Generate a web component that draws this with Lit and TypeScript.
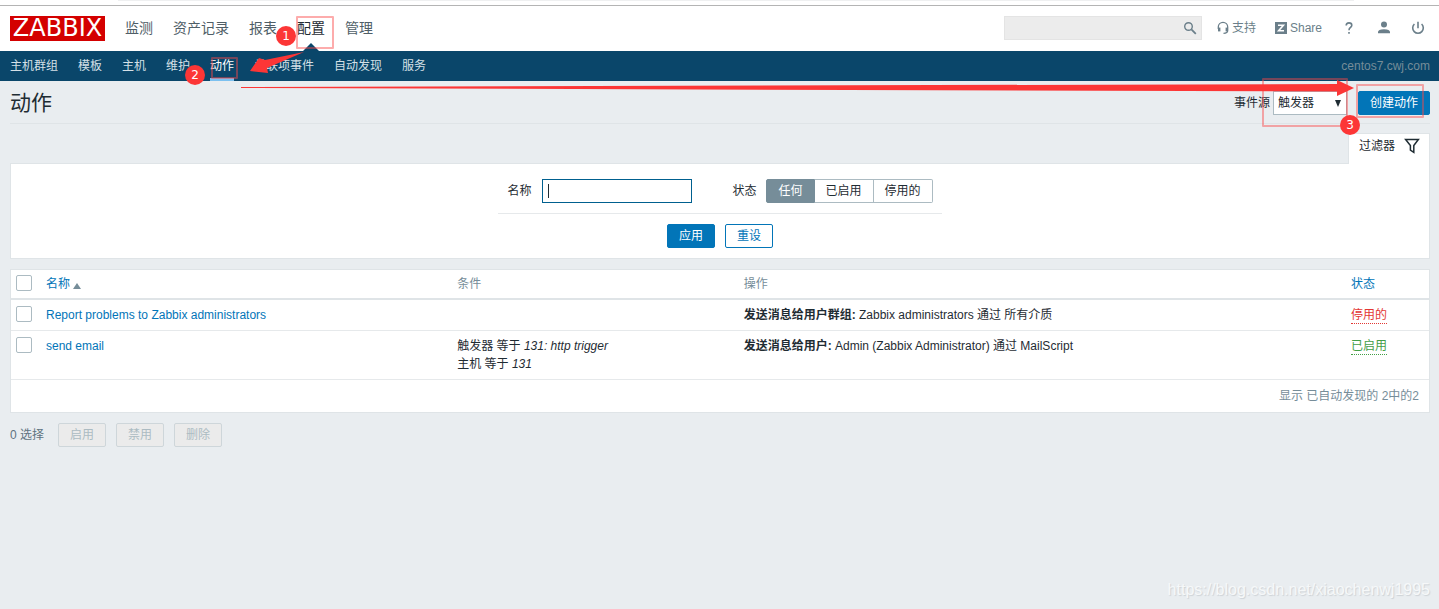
import { LitElement, html, css, svg } from "lit";
import { customElement, state } from "lit/decorators.js";
import { classMap } from "lit/directives/class-map.js";

interface Action {
  name: string;
  conditions: { text: string; value: string }[];
  target: string;
  detail: string;
  enabled: boolean;
}

const MENU = ["监测", "资产记录", "报表", "配置", "管理"];
const SUBMENU = ["主机群组", "模板", "主机", "维护", "动作", "关联项事件", "自动发现", "服务"];
const STATES = ["任何", "已启用", "停用的"];
const ACTIONS: Action[] = [
  {
    name: "Report problems to Zabbix administrators",
    conditions: [],
    target: "发送消息给用户群组:",
    detail: "Zabbix administrators 通过 所有介质",
    enabled: false,
  },
  {
    name: "send email",
    conditions: [
      { text: "触发器 等于", value: "131: http trigger" },
      { text: "主机 等于", value: "131" },
    ],
    target: "发送消息给用户:",
    detail: "Admin (Zabbix Administrator) 通过 MailScript",
    enabled: true,
  },
];

const searchIcon = svg`<svg width="14" height="14" viewBox="0 0 14 14" fill="none" stroke="#6b7f8a">
  <circle cx="5.5" cy="5.5" r="3.8" stroke-width="1.4"/><path d="M8.4 8.4 L12.8 12.8" stroke-width="1.8"/></svg>`;
const supportIcon = svg`<svg width="12" height="14" viewBox="0 0 12 14" fill="none" stroke="#6b7f8a">
  <path d="M1.3 8 V6 A4.7 4.7 0 0 1 10.7 6 V9.6 Q10.7 12.3 6.5 12.3" stroke-width="1.3"/>
  <path d="M2.2 6.6 V10.4" stroke-width="2.4"/><path d="M9.8 6.6 V10.4" stroke-width="2.4"/></svg>`;
const shareIcon = svg`<svg width="12" height="12" viewBox="0 0 12 12">
  <rect width="12" height="12" fill="#6b7f8a"/><path d="M3 3.2 H8.4 L3.6 8.8 H9" fill="none" stroke="#fff" stroke-width="1.6"/></svg>`;
const helpIcon = svg`<svg width="8" height="12" viewBox="0 0 8 12" fill="none" stroke="#6b7f8a" stroke-width="1.6">
  <path d="M1.2 3.6 Q1.2 .9 4 .9 Q6.8 .9 6.8 3.2 Q6.8 4.5 5.4 5.5 Q4 6.4 4 8.2"/><path d="M4 10 V11.8"/></svg>`;
const userIcon = svg`<svg width="14" height="13" viewBox="0 0 14 13" fill="#6b7f8a">
  <circle cx="7" cy="3.5" r="3"/><path d="M1 12.2 V11 Q1 8.4 7 8.2 Q13 8.4 13 11 V12.2 Z"/></svg>`;
const powerIcon = svg`<svg width="14" height="14" viewBox="0 0 14 14" fill="none" stroke="#6b7f8a" stroke-width="1.6">
  <path d="M3.4 3 A5.3 5.3 0 1 0 10.6 3"/><path d="M7 0.8 V7.2"/></svg>`;
const filterIcon = svg`<svg width="16" height="16" viewBox="0 0 16 16" fill="none" stroke="#1f2c33" stroke-width="1.5">
  <path d="M1.6 1.5 H14.4 L9.8 7.6 V14.4 L6.4 12.2 V7.6 Z"/></svg>`;

@customElement("app-root")
export class AppRoot extends LitElement {
  @state() private status = "任何";

  static styles = css`
    :host {
      display: block;
      position: relative;
      min-height: 100vh;
      background: #e9edf0;
      color: #1f2c33;
      font: 12px/18px "Liberation Sans", "Noto Sans CJK SC", sans-serif;
    }
    * { box-sizing: border-box; }
    svg { display: block; }
    a { color: #0275b8; text-decoration: none; }
    input, select, button { font: inherit; color: inherit; margin: 0; }
    .frame { height: 6px; background: #fff; border-bottom: 1px solid #b4b4b4; }
    .frame::before { content: ""; display: block; height: 1px; margin: 0 85px 0 118px; background: #eff0f1; }
    .top { display: flex; align-items: center; justify-content: space-between; height: 45px; padding: 0 14px 0 10px; background: #fff; }
    .left, .menu, .tools, .tool { display: flex; align-items: center; }
    .left, .menu { gap: 20px; align-self: stretch; }
    .tools { padding-bottom: 2px; }
    .logo { width: 95px; height: 25px; background: #d40000; color: #fff; font: 24px/25px "DejaVu Sans", sans-serif; text-align: center; }
    .menu a { display: flex; align-items: center; align-self: stretch; padding-bottom: 2px; color: #4f5e67; font-size: 14px; }
    .menu a.on { position: relative; color: #1f2c33; }
    .menu a.on::after {
      content: ""; position: absolute; left: 50%; bottom: 0; margin-left: -8px;
      border: 8px solid transparent; border-top: 0; border-bottom-color: #0a466a;
    }
    .search { display: flex; align-items: center; width: 198px; height: 24px; margin-right: 15px; padding-right: 4px; background: #ececec; border: 1px solid #e4e4e4; }
    .search input { flex: 1; min-width: 0; border: 0; background: none; outline: 0; }
    .icon { border: 0; padding: 0; background: none; }
    .tool { gap: 3px; color: #6b7f8a; margin-right: 19px; }
    .tool.help { margin: 0 24px 0 4px; }
    .tool.user { margin-right: 20px; }
    .tool.last { margin-right: 0; }
    .sub { display: flex; justify-content: space-between; height: 30px; padding: 0 9px 0 10px; background: #0a466a; line-height: 30px; }
    .links { display: flex; gap: 20px; }
    .links a { color: #d5e0e7; }
    .links a.on { color: #fff; border-bottom: 3px solid #7cc1f0; }
    .host { color: #768d99; }
    main { padding: 10px 9px 10px 10px; }
    .title { display: flex; align-items: center; justify-content: space-between; height: 33px; padding-bottom: 8px; border-bottom: 1px solid #dfe4e7; margin-bottom: 9px; }
    h1 { margin: 0; font-size: 21px; line-height: 24px; font-weight: 400; }
    .source { display: flex; align-items: center; }
    .pick { display: grid; align-items: center; width: 74px; margin: 0 11px 0 3px; }
    .pick > * { grid-area: 1 / 1; }
    .pick select { appearance: none; height: 24px; padding: 0 4px; background: #fff; border: 1px solid #acbbc2; border-radius: 0; }
    .pick svg { justify-self: end; margin-right: 6px; pointer-events: none; }
    .btn { height: 24px; padding: 0 11px; border: 1px solid #0275b8; border-radius: 2px; background: #0275b8; color: #fff; line-height: 22px; white-space: nowrap; }
    .btn.alt { background: #fff; color: #0275b8; }
    .btn:disabled { background: #ebebeb; border-color: #ced6da; color: #acbbc2; }
    .tabrow { display: flex; justify-content: flex-end; }
    .tab { display: flex; align-items: center; gap: 9px; height: 31px; padding: 0 9px 6px 10px; margin-bottom: -1px; position: relative; background: #fff; border: 1px solid #dfe4e7; border-bottom: 0; color: #1f2c33; }
    .filter { display: flex; justify-content: center; padding: 15px 0 10px; background: #fff; border: 1px solid #dfe4e7; margin-bottom: 10px; }
    .fields { display: flex; align-items: center; padding: 0 9px 10px; border-bottom: 1px solid #e6e9eb; }
    .fields label { white-space: nowrap; }
    .name {
      width: 150px; height: 24px; margin: 0 40px 0 11px; padding: 0 5px; border: 1px solid #00608f; border-radius: 0; outline: 0; caret-color: transparent;
      background: linear-gradient(#1f2c33, #1f2c33) 5px 4px / 1px 14px no-repeat #fff;
    }
    .group { display: flex; margin: 0 0 0 10px; padding: 0; border: 0; }
    .group label { height: 24px; padding: 0 11px; border: 1px solid #acbbc2; border-left-width: 0; line-height: 22px; background: #fff; }
    .group label:first-of-type { border-left-width: 1px; border-radius: 2px 0 0 2px; }
    .group label:last-of-type { border-radius: 0 2px 2px 0; }
    .group label.on { background: #768d99; border-color: #768d99; color: #fff; }
    .group input { position: absolute; opacity: 0; pointer-events: none; }
    .submit { display: flex; justify-content: center; gap: 10px; padding-top: 10px; }
    table { width: 100%; table-layout: fixed; border-collapse: separate; border-spacing: 0; background: #fff; border: 1px solid #dfe4e7; }
    .c-box { width: 30px; }
    .c-name { width: 29%; }
    .c-cond { width: 20.2%; }
    .c-state { width: 83px; }
    th, td { padding: 6px 5px; text-align: left; vertical-align: top; border-bottom: 1px solid #e6e9eb; }
    th { padding: 5px; font-weight: 400; color: #768d99; border-bottom: 2px solid #dfe4e7; }
    th .sort { display: flex; align-items: center; gap: 3px; }
    .sort svg { margin-top: 3px; }
    tfoot td { padding: 7px 10px; text-align: right; color: #768d99; border-bottom: 0; }
    .box { display: block; appearance: none; width: 16px; height: 16px; background: #fff; border: 1px solid #acbbc2; border-radius: 2px; }
    .box:checked { background: #0275b8; }
    .state { display: inline-block; line-height: 16px; height: 17px; border-bottom: 1px dotted; color: #e33734; }
    .state.ok { color: #429e47; }
    .bulk { display: flex; align-items: center; gap: 10px; margin-top: 10px; color: #5f7380; }
    .count { margin-right: 4px; }
    .watermark { position: absolute; right: 9px; bottom: 9px; color: #f6f8f9; font-size: 16px; line-height: 20px; text-shadow: 1px 1px 1px #cdd2d6; }
    .marks { position: absolute; inset: 0; pointer-events: none; overflow: hidden; }
    .mark { position: absolute; border: 2px solid rgba(250, 70, 70, 0.45); border-radius: 1px; }
    .m1 { left: 296px; top: 16px; width: 38px; height: 33px; }
    .m2 { left: 211px; top: 57px; width: 27px; height: 22px; }
    .m3 { right: 91px; top: 78px; width: 86px; height: 49px; }
    .m4 { right: 15px; top: 84px; width: 68px; height: 34px; }
    .num { position: absolute; width: 20px; height: 20px; border-radius: 50%; background: #fc3636; color: #fff; font: 12px/20px "DejaVu Sans", sans-serif; text-align: center; }
    .n1 { left: 276px; top: 26px; }
    .n2 { left: 185px; top: 65px; }
    .n3 { right: 79px; top: 115px; }
    .short { position: absolute; left: 249px; top: 50px; }
    .long { position: absolute; left: 241px; right: 85px; top: 80px; display: flex; }
    .long .shaft { flex: 1; min-width: 0; }
    .long .head { flex: none; }
  `;

  render() {
    return html`
      <div class="frame"></div>
      <header class="top">
        <div class="left">
          <a class="logo" href="#">ZABBIX</a>
          <nav class="menu">
            ${MENU.map((m) => html`<a href="#" class=${classMap({ on: m === "配置" })}>${m}</a>`)}
          </nav>
        </div>
        <div class="tools">
          <form class="search" role="search">
            <input type="text" aria-label="搜索" />
            <button class="icon" type="button" aria-label="搜索">${searchIcon}</button>
          </form>
          <a class="tool" href="#">${supportIcon}支持</a>
          <a class="tool" href="#">${shareIcon}Share</a>
          <a class="tool help" href="#" aria-label="帮助">${helpIcon}</a>
          <a class="tool user" href="#" aria-label="用户">${userIcon}</a>
          <a class="tool last" href="#" aria-label="退出">${powerIcon}</a>
        </div>
      </header>
      <div class="sub">
        <nav class="links">
          ${SUBMENU.map((m) => html`<a href="#" class=${classMap({ on: m === "动作" })}>${m}</a>`)}
        </nav>
        <span class="host">centos7.cwj.com</span>
      </div>
      <main>
        <div class="title">
          <h1>动作</h1>
          <div class="source">
            <label for="source">事件源</label>
            <span class="pick">
              <select id="source"><option>触发器</option></select>
              <svg width="6" height="7" viewBox="0 0 6 7"><path d="M0 0 H6 L3 7 Z" fill="#1f2c33" /></svg>
            </span>
            <button class="btn" type="button">创建动作</button>
          </div>
        </div>
        <div class="tabrow"><a class="tab" href="#">过滤器${filterIcon}</a></div>
        <form class="filter">
          <div>
            <div class="fields">
              <label for="name">名称</label>
              <input class="name" id="name" type="text" />
              <span id="state-label">状态</span>
              <div class="group" role="radiogroup" aria-labelledby="state-label">
                ${STATES.map(
                  (s) => html`<label class=${classMap({ on: s === this.status })}
                    ><input type="radio" name="state" .checked=${s === this.status} @change=${() => (this.status = s)} />${s}</label
                  >`
                )}
              </div>
            </div>
            <div class="submit">
              <button class="btn" type="button">应用</button>
              <button class="btn alt" type="button">重设</button>
            </div>
          </div>
        </form>
        <table>
          <colgroup><col class="c-box" /><col class="c-name" /><col class="c-cond" /><col /><col class="c-state" /></colgroup>
          <thead>
            <tr>
              <th><input class="box" type="checkbox" aria-label="全选" /></th>
              <th>
                <a class="sort" href="#">名称<svg width="8" height="6" viewBox="0 0 8 6"><path d="M4 0 L8 6 H0 Z" fill="#768d99" /></svg></a>
              </th>
              <th>条件</th>
              <th>操作</th>
              <th><a href="#">状态</a></th>
            </tr>
          </thead>
          <tbody>
            ${ACTIONS.map(
              (a) => html`<tr>
                <td><input class="box" type="checkbox" aria-label=${a.name} /></td>
                <td><a href="#">${a.name}</a></td>
                <td>${a.conditions.map((c) => html`<div>${c.text} <em>${c.value}</em></div>`)}</td>
                <td><b>${a.target}</b> ${a.detail}</td>
                <td><a href="#" class=${classMap({ state: true, ok: a.enabled })}>${a.enabled ? "已启用" : "停用的"}</a></td>
              </tr>`
            )}
          </tbody>
          <tfoot><tr><td colspan="5">显示 已自动发现的 2中的2</td></tr></tfoot>
        </table>
        <div class="bulk">
          <span class="count">0 选择</span>
          <button class="btn" disabled>启用</button>
          <button class="btn" disabled>禁用</button>
          <button class="btn" disabled>删除</button>
        </div>
      </main>
      <div class="watermark">https://blog.csdn.net/xiaochenwj1995</div>
      <div class="marks">
        <div class="mark m1"></div>
        <div class="mark m2"></div>
        <div class="mark m3"></div>
        <div class="mark m4"></div>
        <svg class="short" width="56" height="26" viewBox="0 0 56 26">
          <path d="M55 2 L16 10 L10 8 L1 21 L19 23 L18 18 Z" fill="#fc3636" />
        </svg>
        <div class="long">
          <svg class="shaft" height="16" viewBox="0 0 1100 16" preserveAspectRatio="none">
            <path d="M0 7 L1100 4 V11.5 L0 8 Z" fill="#fc3636" />
          </svg>
          <svg class="head" width="17" height="16" viewBox="0 0 17 16"><path d="M0 0 L17 8 L0 16 Z" fill="#fc3636" /></svg>
        </div>
        <span class="num n1">1</span>
        <span class="num n2">2</span>
        <span class="num n3">3</span>
      </div>
    `;
  }
}
